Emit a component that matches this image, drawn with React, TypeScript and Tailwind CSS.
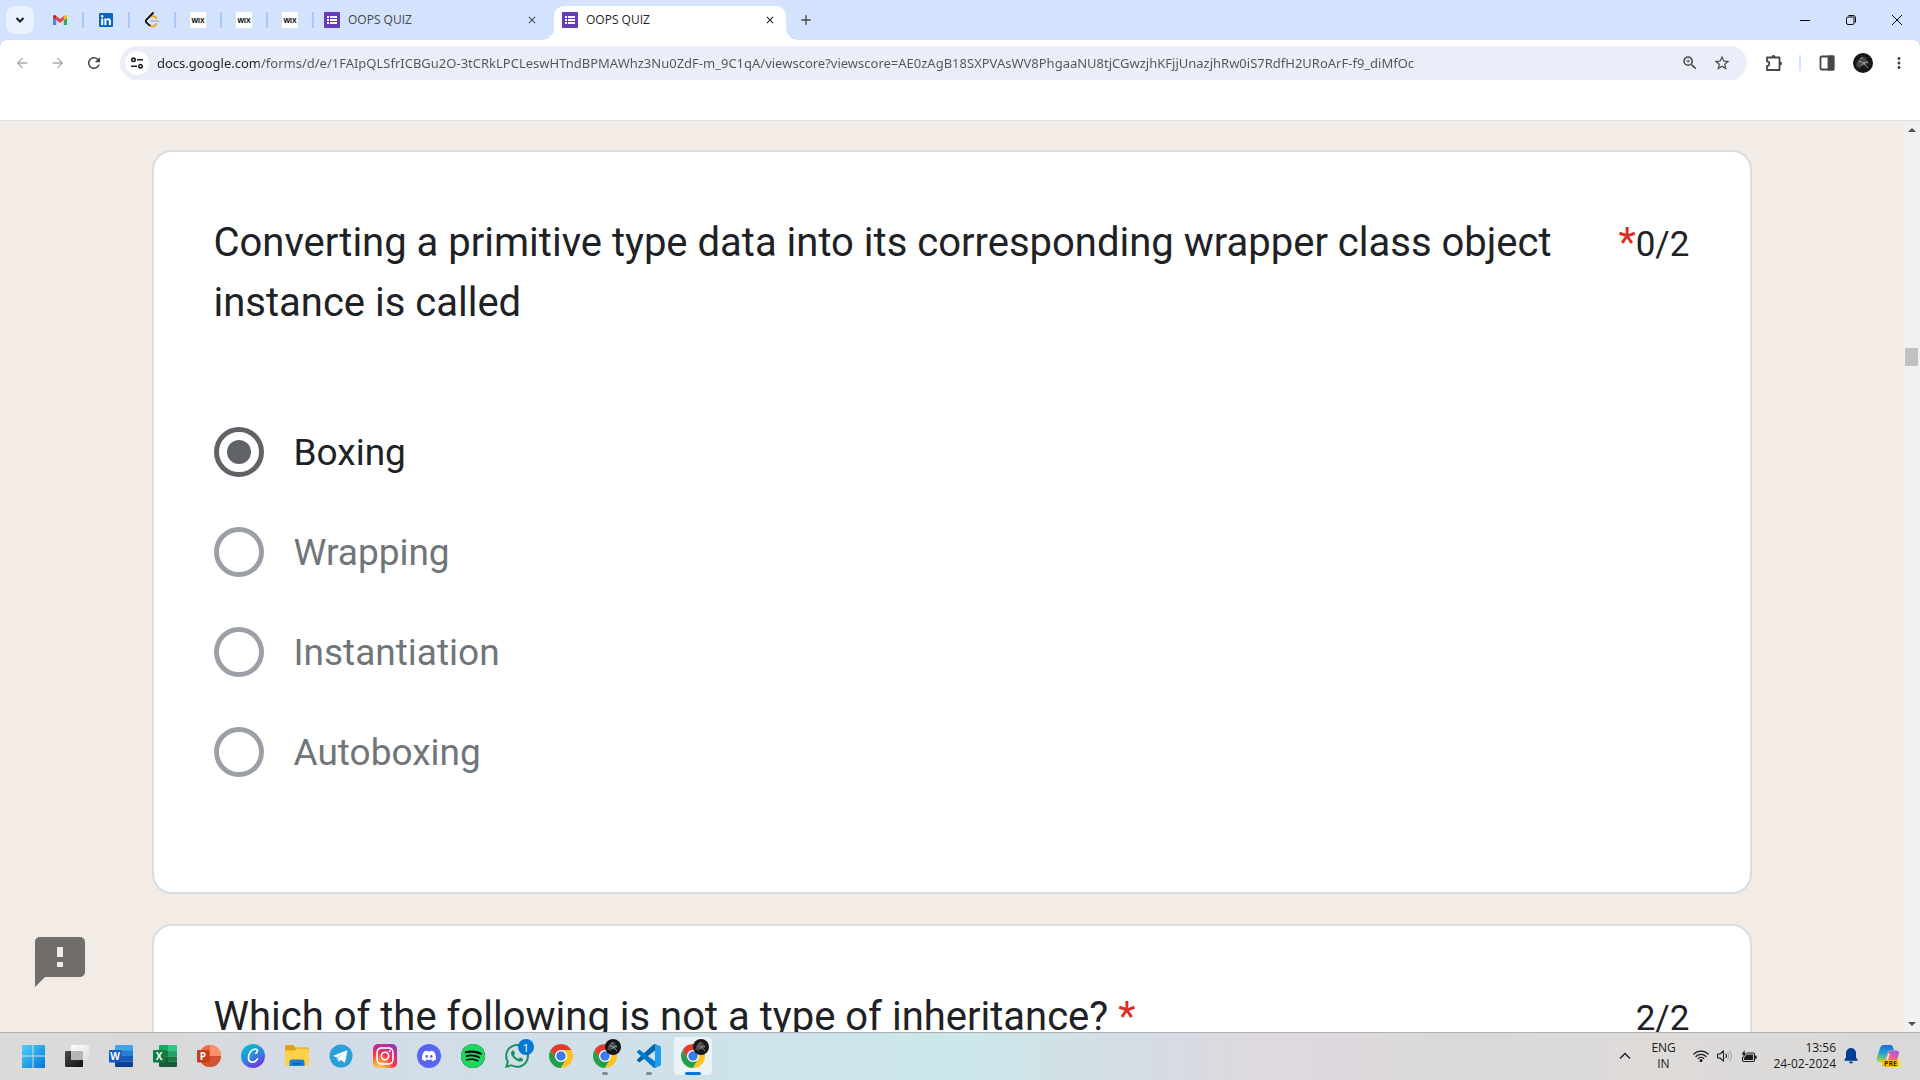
import type { ReactNode } from "react";
import { MdArrowBack, MdArrowForward, MdRefresh, MdZoomIn, MdStarBorder, MdMoreVert, MdClose, MdAdd } from "react-icons/md";
import { SiDiscord, SiSpotify, SiWhatsapp } from "react-icons/si";
import { FaInstagram } from "react-icons/fa";

/* ---------- site and app logos ---------- */

function GmailLogo() {
  return (
    <svg viewBox="52 42 88 66" className="w-3.5">
      <path fill="#4285f4" d="M58 108h14V74L52 59v43c0 3.32 2.69 6 6 6" />
      <path fill="#34a853" d="M120 108h14c3.32 0 6-2.69 6-6V59l-20 15" />
      <path fill="#fbbc04" d="M120 48v26l20-15v-8c0-7.42-8.47-11.65-14.4-7.2" />
      <path fill="#ea4335" d="M72 74V48l24 18 24-18v26L96 92" />
      <path fill="#c5221f" d="M52 51v8l20 15V48l-5.6-4.2c-5.94-4.45-14.4-.22-14.4 7.2" />
    </svg>
  );
}

function LinkedInLogo() {
  return (
    <svg viewBox="0 0 14 14" className="size-3.5">
      <rect width="14" height="14" rx="1" fill="#0a66c2" />
      <circle cx="3.2" cy="3.2" r="1.2" fill="#fff" />
      <path fill="#fff" d="M2.2 5.4h2V12h-2zM5.4 5.4h1.9v.9c.4-.7 1.1-1.1 2.1-1.1 2 0 2.5 1.3 2.5 3.1V12h-2V8.7c0-.9-.1-1.8-1.2-1.8s-1.3.9-1.3 1.8V12h-2z" />
    </svg>
  );
}

function LeetCodeLogo() {
  return (
    <svg viewBox="0 0 24 24" className="size-4" fill="none" strokeLinecap="round">
      <path d="M18.5 9 16 6.8a3.6 3.6 0 0 0-4-.2M9 20l.4.5a4.8 4.8 0 0 0 6.8 0l2.5-2.5" stroke="#ffa116" strokeWidth="2.8" />
      <path d="M10.500 13.500h11" stroke="#b3b3b3" strokeWidth="2.6" />
      <path d="M13.5 1.5 3.8 11.5a3.2 3.2 0 0 0 0 4.4L8.300 20" stroke="#111" strokeWidth="2.8" />
    </svg>
  );
}

function WixLogo() {
  return (
    <span className="grid size-4 place-items-center bg-white font-['Liberation_Sans',sans-serif] text-[7px] leading-none font-bold text-black">WIX</span>
  );
}

function FormsLogo() {
  return (
    <svg viewBox="0 0 16 16" className="size-4 shrink-0">
      <rect width="16" height="16" rx="1" fill="#673ab7" />
      <path fill="#fff" d="M3 4h2v2H3zM6 4h7v2H6zM3 7h2v2H3zM6 7h7v2H6zM3 10h2v2H3zM6 10h7v2H6z" />
    </svg>
  );
}

function WindowsLogo() {
  return (
    <svg viewBox="0 0 24 24" className="size-6">
      <defs>
        <linearGradient id="win" x1="0" y1="0" x2="1" y2="1">
          <stop offset="0" stopColor="#4fd0ff" />
          <stop offset="1" stopColor="#0078d4" />
        </linearGradient>
      </defs>
      <path fill="url(#win)" d="M1 1h10.500v10.500H1zM12.500 1H24v10.500H12.500zM1 12.500h10.500V24H1zM12.500 12.500H24V24H12.500z" />
    </svg>
  );
}

function TaskViewLogo() {
  return (
    <svg viewBox="0 0 24 24" className="size-6">
      <defs>
        <linearGradient id="tvd" x1="0" y1="0" x2="1" y2="1">
          <stop offset="0" stopColor="#4a4a4a" />
          <stop offset="1" stopColor="#111" />
        </linearGradient>
        <linearGradient id="tvl" x1="0" y1="0" x2="1" y2="1">
          <stop offset="0" stopColor="#ffffff" />
          <stop offset="1" stopColor="#dedede" />
        </linearGradient>
      </defs>
      <rect x="0" y="7" width="18" height="16" rx="1" fill="url(#tvd)" />
      <rect x="6" y="1" width="18" height="15" rx="1" fill="url(#tvl)" />
      <path d="M6 7h12v9H6z" fill="#b5b5b5" />
    </svg>
  );
}

function OfficeBadge({ color, letter }: { color: string; letter: "W" | "X" | "P" }) {
  return (
    <>
      <rect x="0" y="6" width="12.500" height="12.500" rx="1" fill={color} />
      <text x="6" y="16" textAnchor="middle" fill="#fff" className="font-['Open_Sans',sans-serif] text-[10px] font-bold">{letter}</text>
    </>
  );
}

function WordLogo() {
  return (
    <svg viewBox="0 0 24 24" className="size-6">
      <path fill="#41a5ee" d="M6 2a1 1 0 0 1 1-1h16a1 1 0 0 1 1 1v5H6z" />
      <path fill="#2b7cd3" d="M6 6.500h18V12H6z" />
      <path fill="#185abd" d="M6 12h18v5.500H6z" />
      <path fill="#103f91" d="M6 17.500h18V22a1 1 0 0 1-1 1H7a1 1 0 0 1-1-1z" />
      <OfficeBadge color="#185abd" letter="W" />
    </svg>
  );
}

function ExcelLogo() {
  return (
    <svg viewBox="0 0 24 24" className="size-6">
      <path fill="#21a366" d="M6 1h9v6H6z" />
      <path fill="#33c481" d="M15 1h8a1 1 0 0 1 1 1v5h-9z" />
      <path fill="#107c41" d="M6 7h9v5.500H6z" />
      <path fill="#21a366" d="M15 7h9v5.500h-9z" />
      <path fill="#185c37" d="M6 12.500h9V23H7a1 1 0 0 1-1-1z" />
      <path fill="#107c41" d="M15 12.500h9v5h-9z" />
      <path fill="#185c37" d="M15 17.500h9V22a1 1 0 0 1-1 1h-8z" />
      <OfficeBadge color="#107c41" letter="X" />
    </svg>
  );
}

function PowerPointLogo() {
  return (
    <svg viewBox="0 0 24 24" className="size-6">
      <circle cx="13" cy="12" r="11" fill="#ed6c47" />
      <path fill="#ff8f6b" d="M13 1a11 11 0 0 1 11 11H13z" />
      <path fill="#d35230" d="M2 12h22a11 11 0 0 1-22 0z" />
      <OfficeBadge color="#c43e1c" letter="P" />
    </svg>
  );
}

function CanvaLogo() {
  return (
    <svg viewBox="0 0 24 24" className="size-6">
      <defs>
        <linearGradient id="canva" x1="0.2" y1="0" x2="0.7" y2="1">
          <stop offset="0" stopColor="#00c4cc" />
          <stop offset="0.5" stopColor="#2a8ce0" />
          <stop offset="1" stopColor="#7d2ae8" />
        </linearGradient>
      </defs>
      <circle cx="12" cy="12" r="12" fill="url(#canva)" />
      <path d="M14.800 9.200c2-.8 2.200-4-.3-4.200-3.500-.2-7 4.200-7 8.600 0 6.200 6.300 5.600 9 1.300" fill="none" stroke="#fff" strokeWidth="1.7" strokeLinecap="round" />
    </svg>
  );
}

function ExplorerLogo() {
  return (
    <svg viewBox="0 0 24 24" className="size-6">
      <path fill="#e0a010" d="M0 2.500A1.500 1.500 0 0 1 1.500 1H8l2.500 2.500H22.500A1.500 1.500 0 0 1 24 5v4H0z" />
      <path fill="#ffd04a" d="M0 6.500h9.500L12 4.500h10.500A1.500 1.500 0 0 1 24 6v14.500a1.500 1.500 0 0 1-1.500 1.500h-21A1.500 1.500 0 0 1 0 20.500z" />
      <path fill="#1a7fd0" d="M4.500 22v-4A2.500 2.500 0 0 1 7 15.500h10a2.500 2.500 0 0 1 2.500 2.500v4z" />
      <path fill="#0b5ea8" d="M8 19h8v1.500H8z" />
    </svg>
  );
}

function TelegramLogo() {
  return (
    <svg viewBox="0 0 24 24" className="size-6">
      <circle cx="12" cy="12" r="11.500" fill="#2a9fda" />
      <path fill="#fff" d="M4.500 11.700 17.300 6.500c.7-.2 1.200.2 1 1l-2.100 10.200c-.2.7-.7.9-1.300.5l-3.200-2.400-1.700 1.600c-.3.300-.7.200-.8-.200L8.100 13.400l-3.500-1.100c-.4-.2-.4-.4-.1-.6z" />
      <path fill="#a9d4ec" d="m9.300 17.300.3-3.400 6-5.400-7.500 4.900z" />
    </svg>
  );
}

function InstagramLogo() {
  return (
    <span className="grid size-6 place-items-center rounded-[5px] bg-[radial-gradient(circle_at_25%_105%,#fdd76a_0%,#fb9a3c_25%,#f0384c_50%,#cc2a8c_72%,#7a3fc4_100%)]">
      <FaInstagram className="size-5 text-white" />
    </span>
  );
}

function DiscordLogo() {
  return (
    <span className="grid size-6 place-items-center rounded-full bg-[#5865f2]">
      <SiDiscord className="size-3.5 text-white" />
    </span>
  );
}

function SpotifyLogo() {
  return (
    <span className="grid size-6 place-items-center rounded-full bg-black">
      <SiSpotify className="size-6 text-[#1ed760]" />
    </span>
  );
}

function WhatsAppLogo() {
  return (
    <span className="relative grid size-6 place-items-center">
      <SiWhatsapp className="size-6 text-[#1f8f5f]" />
      <span className="absolute -top-[5px] left-[13px] grid size-4 place-items-center rounded-full bg-[#0078d4] text-[11px] leading-none text-white">1</span>
    </span>
  );
}

function ChromeLogo() {
  return (
    <svg viewBox="0 0 48 48" className="size-6">
      <circle cx="24" cy="24" r="13" fill="#fff" />
      <path fill="#e33b2e" d="M3.220 12A24 24 0 0 1 44.780 12H24A12 12 0 0 0 13.600 30z" />
      <path fill="#22a048" d="M24 48A24 24 0 0 1 3.220 12L13.600 30A12 12 0 0 0 34.400 30z" />
      <path fill="#fcc31e" d="M24 12H44.780A24 24 0 0 1 24 48L34.400 30A12 12 0 0 0 24 12z" />
      <circle cx="24" cy="24" r="9.500" fill="#3b7ded" />
    </svg>
  );
}

function DarkAvatar({ tint }: { tint: string }) {
  return (
    <svg viewBox="0 0 20 20" className="size-full">
      <circle cx="10" cy="10" r="10" fill="#161616" />
      <path d="M4 9c2-4 7-6 10-4l-3 1c3 0 5 3 4.500 6l-2-2-1.500 3-3-1-3 4-1-3-2 1z" fill="#4b4b4b" />
      <path d="m6 8 4 2 5-1M8 13l3-3 4 5M7 6l3-2" stroke={tint} strokeWidth="0.9" fill="none" />
    </svg>
  );
}

function ChromeProfileLogo({ tint }: { tint: string }) {
  return (
    <span className="relative block size-6">
      <ChromeLogo />
      <span className="absolute -top-[5px] left-3 block size-4">
        <DarkAvatar tint={tint} />
      </span>
    </span>
  );
}

function VsCodeLogo() {
  return (
    <svg viewBox="0 0 100 100" className="size-6">
      <path fill="#0065a9" d="M96.460 10.800 75.860.88a6.200 6.200 0 0 0-7.110 1.200L1.300 63.580a4.200 4.200 0 0 0 0 6.170l5.510 5a4.200 4.200 0 0 0 5.320.24l81.230-61.620A4.200 4.200 0 0 1 100 16.670v-.24a6.200 6.200 0 0 0-3.540-5.630z" />
      <path fill="#007acc" d="M96.460 89.200 75.860 99.120a6.200 6.200 0 0 1-7.110-1.200L1.300 36.420a4.200 4.200 0 0 1 0-6.170l5.510-5a4.200 4.200 0 0 1 5.320-.24l81.230 61.620A4.200 4.200 0 0 0 100 83.330v.24a6.200 6.200 0 0 1-3.540 5.630z" />
      <path fill="#1f9cf0" d="M75.860 99.130a6.200 6.200 0 0 1-7.110-1.210C71.060 100.220 75 98.590 75 95.330V4.670C75 1.410 71.060-.22 68.750 2.080a6.200 6.200 0 0 1 7.110-1.210l20.600 9.910A6.200 6.200 0 0 1 100 16.410v67.180a6.200 6.200 0 0 1-3.540 5.630z" />
    </svg>
  );
}

function CopilotLogo() {
  return (
    <span className="relative block size-6">
      <svg viewBox="0 0 24 24" className="size-6">
        <defs>
          <linearGradient id="cpa" x1="0.3" y1="0" x2="0.2" y2="1">
            <stop offset="0" stopColor="#1b6fe0" />
            <stop offset="0.5" stopColor="#25a8c8" />
            <stop offset="1" stopColor="#b8d63a" />
          </linearGradient>
          <linearGradient id="cpb" x1="1" y1="0" x2="0" y2="1">
            <stop offset="0" stopColor="#9a5cf0" />
            <stop offset="0.5" stopColor="#ee5c9c" />
            <stop offset="1" stopColor="#ff9a4a" />
          </linearGradient>
        </defs>
        <path fill="url(#cpb)" d="M15 6.500h5.500a2.500 2.500 0 0 1 2.400 3.300l-2.600 8.700a4 4 0 0 1-4 3H8.500l3.200-12.500A3.500 3.500 0 0 1 15 6.500z" />
        <path fill="url(#cpa)" d="M7.500 1H14a3 3 0 0 1 3 2.200l1 3.300h-3.500c-1.700 0-2.500 1-3 2.500L9.500 16c-.4 1.300-1.300 2-2.700 2H3a2.500 2.500 0 0 1-2.400-3.300L4.200 3.500A3.500 3.500 0 0 1 7.500 1z" />
        <path d="m13 9.500-2.600 9" stroke="#f3e9f2" strokeWidth="1.5" />
      </svg>
      <span className="absolute top-4 left-1.5 rounded-xs bg-[#ffc20e] px-0.5 text-[7px] leading-[7px] font-bold text-[#3a2a00]">PRE</span>
    </span>
  );
}

/* ---------- browser chrome ---------- */

const pinned = [
  { name: "Gmail", icon: <GmailLogo /> },
  { name: "LinkedIn", icon: <LinkedInLogo /> },
  { name: "LeetCode", icon: <LeetCodeLogo /> },
  { name: "Wix site 1", icon: <WixLogo /> },
  { name: "Wix site 2", icon: <WixLogo /> },
  { name: "Wix site 3", icon: <WixLogo /> },
];

function TabStrip() {
  return (
    <header className="flex h-10 items-center bg-[#d3e2fd] pl-1.5">
      <button aria-label="Search tabs" className="mr-1 grid size-7 place-items-center rounded-[9px] bg-[#eaf1fe]">
        <svg viewBox="0 0 10 10" className="size-2.5" fill="none" stroke="#1f1f1f" strokeWidth="2">
          <path d="m1.500 3 3.500 3.500L8.500 3" />
        </svg>
      </button>
      {pinned.map((p) => (
        <button key={p.name} aria-label={p.name} className="flex h-full w-[46px] items-center">
          <span className="grid flex-1 place-items-center">{p.icon}</span>
          <span className="h-4 w-0.5 bg-[#a8c7fa]" />
        </button>
      ))}
      <div className="flex h-full w-60 items-center pr-4 pl-2.5 text-[12px] text-[#474747]">
        <FormsLogo />
        <button className="flex-1 pl-2 text-left">OOPS QUIZ</button>
        <button aria-label="Close tab"><MdClose className="size-3" /></button>
      </div>
      <div className="relative flex h-[34px] w-[232px] items-center self-end rounded-t-[10px] bg-white pr-2.5 pb-1.5 pl-2 text-[12px] text-[#1f1f1f]">
        <span className="absolute bottom-0 -left-3 size-3 bg-[radial-gradient(circle_at_0_0,transparent_12px,white_12px)]" />
        <span className="absolute -right-3 bottom-0 size-3 bg-[radial-gradient(circle_at_100%_0,transparent_12px,white_12px)]" />
        <FormsLogo />
        <button className="flex-1 pl-2 text-left">OOPS QUIZ</button>
        <button aria-label="Close tab"><MdClose className="size-3" /></button>
      </div>
      <button aria-label="New tab" className="ml-3 text-[#474747]"><MdAdd className="size-4" /></button>
      <div className="ml-auto flex h-full text-black">
        <button aria-label="Minimize" className="grid w-[46px] place-items-center"><span className="h-px w-2.5 bg-black" /></button>
        <button aria-label="Restore" className="grid w-[46px] place-items-center">
          <svg viewBox="0 0 10 10" className="size-2.5 overflow-visible" fill="none" stroke="currentColor">
            <rect x="0.500" y="2" width="7.500" height="7.500" rx="1.500" />
            <path d="M2.500.5h4.500a2.500 2.500 0 0 1 2.500 2.500v4.500" />
          </svg>
        </button>
        <button aria-label="Close window" className="grid w-[46px] place-items-center">
          <svg viewBox="0 0 10 10" className="size-2.5" stroke="currentColor"><path d="m0 0 10 10M10 0 0 10" /></svg>
        </button>
      </div>
    </header>
  );
}

function Toolbar() {
  return (
    <div className="bg-[#d3e2fd]">
      <nav className="flex h-20 items-start rounded-t-lg bg-white px-3 pt-1.5">
        <div className="flex h-[34px] w-27 shrink-0 items-center gap-4 text-[#474747]">
          <button aria-label="Back" className="text-[#a9a9a9]"><MdArrowBack className="size-5 p-0.5" /></button>
          <button aria-label="Forward" className="text-[#a9a9a9]"><MdArrowForward className="size-5 p-0.5" /></button>
          <button aria-label="Reload"><MdRefresh className="size-5 p-px" /></button>
        </div>
        <div className="flex h-[34px] min-w-0 flex-1 items-center rounded-full bg-[#ebeef8] pr-4 pl-[5px] text-[#474747]">
          <button aria-label="View site information" className="grid size-6 shrink-0 place-items-center rounded-full bg-white">
            <svg viewBox="0 0 14 12" className="w-3.5" fill="none" stroke="#1f1f1f" strokeWidth="1.6">
              <circle cx="3.500" cy="2.800" r="1.700" />
              <path d="M7 2.800h6M1 9.200h6" />
              <circle cx="10.500" cy="9.200" r="1.700" />
            </svg>
          </button>
          <input
            aria-label="Address"
            readOnly
            className="ml-2 h-[34px] min-w-0 flex-1 bg-[linear-gradient(90deg,#1f1f1f_102px,#50545a_102px)] bg-clip-text font-['Noto_Sans',sans-serif] text-[13px] text-transparent outline-none"
            value="docs.google.com/forms/d/e/1FAIpQLSfrICBGu2O-3tCRkLPCLeswHTndBPMAWhz3Nu0ZdF-m_9C1qA/viewscore?viewscore=AE0zAgB18SXPVAsWV8PhgaaNU8tjCGwzjhKFjjUnazjhRw0iS7RdfH2URoArF-f9_diMfOc"
          />
          <button aria-label="Zoom"><MdZoomIn className="size-[18px]" /></button>
          <button aria-label="Bookmark this page" className="ml-3.5"><MdStarBorder className="size-[18px]" /></button>
        </div>
        <div className="ml-[18px] flex h-[34px] shrink-0 items-center text-[#474747]">
          <button aria-label="Extensions">
            <svg viewBox="0 0 18 18" className="size-[18px]" fill="none" stroke="currentColor" strokeWidth="1.8">
              <path d="M2 3.500h12.500V16H2v-4a2 2 0 0 0 0-4.500z" strokeLinejoin="round" />
              <path d="M6.500 3a2 2 0 0 1 4 0zM15 7.500a2 2 0 0 1 0 4z" fill="currentColor" stroke="none" />
            </svg>
          </button>
          <span className="mr-[18px] ml-4 h-4 w-0.5 bg-[#d3e2fd]" />
          <button aria-label="Side panel">
            <svg viewBox="0 0 16 16" className="size-4" fill="none" stroke="currentColor" strokeWidth="1.8">
              <rect x="1.500" y="1.500" width="13" height="13" rx="1" />
              <path d="M9.500 1.500h5v13h-5z" fill="currentColor" />
            </svg>
          </button>
          <button aria-label="Profile" className="mr-[17px] ml-[18px] size-5"><DarkAvatar tint="#a5a5a5" /></button>
          <button aria-label="Menu"><MdMoreVert className="size-[18px]" /></button>
        </div>
      </nav>
    </div>
  );
}

/* ---------- quiz ---------- */

function Star() {
  return <span className="text-[#d93025]">*</span>;
}

function Card({ title, marker, score, children }: { title: ReactNode; marker?: ReactNode; score: string; children?: ReactNode }) {
  return (
    <section className="rounded-[20px] border-2 border-[#dadce0] bg-white px-15 pt-[61px] pb-[90px] text-[#202124]">
      <div className="flex items-baseline text-[40px] leading-[60px]">
        <h2 className="flex-1 pr-10">{title}</h2>
        {marker}
        <span className="text-[35px]">{score}</span>
      </div>
      {children}
    </section>
  );
}

const options = ["Boxing", "Wrapping", "Instantiation", "Autoboxing"];

function Quiz() {
  return (
    <main className="relative min-w-0 flex-1 overflow-hidden bg-[#f3ebe6] px-8 pt-[29px] font-[Roboto,sans-serif]">
      <div className="mx-auto flex max-w-[1600px] flex-col gap-[30px]">
        <Card title="Converting a primitive type data into its corresponding wrapper class object instance is called" marker={<Star />} score="0/2">
          <div className="mt-[69px] text-[37px]">
            {options.map((o, i) => (
              <label key={o} className={`flex h-25 items-center gap-[30px] ${i === 0 ? "text-[#202124]" : "text-[#70757a]"}`}>
                <input
                  type="radio"
                  name="q1"
                  defaultChecked={i === 0}
                  className="grid size-[50px] appearance-none place-items-center rounded-full border-5 border-[#9aa0a6] checked:border-[#5f6368] checked:before:size-6 checked:before:rounded-full checked:before:bg-[#5f6368] checked:before:content-['']"
                />
                <span className="pt-0.5">{o}</span>
              </label>
            ))}
          </div>
        </Card>
        <Card title={<>Which of the following is not a type of inheritance? <Star /></>} score="2/2" />
      </div>
      <button aria-label="Report a problem" className="absolute bottom-10 left-[30px] text-[#706d6a]">
        <svg viewBox="0 0 24 24" className="size-15" fill="currentColor">
          <path d="M20 2H4c-1.100 0-1.990.9-1.990 2L2 22l4-4h14c1.100 0 2-.9 2-2V4c0-1.100-.9-2-2-2zm-6.800 12h-2.400v-2h2.400v2zm0-4h-2.400V6h2.400v4z" />
        </svg>
      </button>
    </main>
  );
}

function Scrollbar() {
  return (
    <div className="flex w-[17px] flex-col items-center bg-[#f1f1f1] pt-[7px] pb-1.5 text-[#505050]">
      <svg viewBox="0 0 8 4" className="w-2" fill="currentColor"><path d="M0 4 4 0l4 4z" /></svg>
      <div className="basis-[216px]" />
      <div className="h-[18px] w-[13px] bg-[#c1c1c1]" />
      <svg viewBox="0 0 8 4" className="mt-auto w-2" fill="currentColor"><path d="m0 0 4 4 4-4z" /></svg>
    </div>
  );
}

/* ---------- taskbar ---------- */

const apps: { name: string; icon: ReactNode; state?: "open" | "active" }[] = [
  { name: "Start", icon: <WindowsLogo /> },
  { name: "Task view", icon: <TaskViewLogo /> },
  { name: "Word", icon: <WordLogo /> },
  { name: "Excel", icon: <ExcelLogo /> },
  { name: "PowerPoint", icon: <PowerPointLogo /> },
  { name: "Canva", icon: <CanvaLogo /> },
  { name: "File Explorer", icon: <ExplorerLogo /> },
  { name: "Telegram", icon: <TelegramLogo /> },
  { name: "Instagram", icon: <InstagramLogo /> },
  { name: "Discord", icon: <DiscordLogo /> },
  { name: "Spotify", icon: <SpotifyLogo /> },
  { name: "WhatsApp", icon: <WhatsAppLogo /> },
  { name: "Chrome", icon: <ChromeLogo /> },
  { name: "Chrome, first profile", icon: <ChromeProfileLogo tint="#8fc4ea" />, state: "open" },
  { name: "Visual Studio Code", icon: <VsCodeLogo />, state: "open" },
  { name: "Chrome, second profile", icon: <ChromeProfileLogo tint="#9a9a9a" />, state: "active" },
];

function Taskbar() {
  return (
    <footer className="flex h-12 items-center border-t border-[#adb0b3] bg-[linear-gradient(90deg,#dcdad9_0%,#dad9d9_8%,#d2dce7_18%,#cfe1e9_35%,#cbe7ea_50%,#d6dce3_60%,#e0d8df_67%,#d9d9d9_76%,#dedbd9_86%,#d9d9d9_100%)] pr-5 pb-px pl-[11px] text-[12px] text-[#1b1b1b]">
      {apps.map((a) => (
        <button key={a.name} aria-label={a.name} className="relative flex h-full w-11 items-center justify-center">
          <span className={`grid h-[38px] w-[38px] place-items-center rounded-sm ${a.state === "active" ? "bg-white/60" : ""}`}>{a.icon}</span>
          {a.state === "open" && <span className="absolute bottom-1 h-[3px] w-1.5 rounded-full bg-[#83888c]" />}
          {a.state === "active" && <span className="absolute bottom-1 h-[3px] w-4 rounded-full bg-[#0078d4]" />}
        </button>
      ))}
      <div className="ml-auto flex items-center">
        <button aria-label="Show hidden icons">
          <svg viewBox="0 0 12 12" className="size-3" fill="none" stroke="currentColor" strokeWidth="1.3"><path d="m1 8.500 5-5 5 5" /></svg>
        </button>
        <button className="ml-5 w-6 text-center text-[12px] leading-4">ENG<br />IN</button>
        <button aria-label="Network, volume and battery" className="ml-[18px] flex items-center gap-2">
          <svg viewBox="0 0 16 12" className="w-4" fill="none" stroke="currentColor" strokeWidth="1.2" strokeLinecap="round">
            <path d="M.8 4.200a10.200 10.200 0 0 1 14.400 0M3 6.500a7 7 0 0 1 10 0M5.200 8.600a4 4 0 0 1 5.600 0" />
            <circle cx="8" cy="10.600" r="0.900" fill="currentColor" />
          </svg>
          <svg viewBox="0 0 16 12" className="w-4" fill="none" stroke="currentColor" strokeWidth="1.1" strokeLinejoin="round">
            <path d="M.6 4h2.400L6.500.8v10.400L3 8H.6z" />
            <path d="M8.600 4a2.800 2.800 0 0 1 0 4" />
            <path d="M10.500 2.500a5 5 0 0 1 0 7M12.500 1a7 7 0 0 1 0 10" stroke="#a5a5a5" />
          </svg>
          <svg viewBox="0 0 16 13" className="w-4" fill="none" stroke="currentColor" strokeWidth="1.2">
            <path d="M5.500 3h6.500a1.500 1.500 0 0 1 1.500 1.500v5.500a1.500 1.500 0 0 1-1.500 1.500H3A1.500 1.500 0 0 1 1.500 10V7" />
            <path d="M6 5.200h5.300v4.100H3.700V8z" fill="currentColor" />
            <path d="M14.800 5.700v3" strokeWidth="1.6" />
            <path d="M3.800 0 .5 4.500h2L2 8l3.500-4.800h-2z" fill="currentColor" stroke="none" />
          </svg>
        </button>
        <button className="ml-4 text-right text-[12px] leading-4 whitespace-nowrap">13:56<br />24-02-2024</button>
        <button aria-label="Notifications" className="ml-2">
          <svg viewBox="0 0 14 16" className="w-3.5" fill="#003e92">
            <path d="M7 0a5 5 0 0 1 5 5v4.500l1.600 2.300c.2.400 0 .900-.6.900H1c-.6 0-.8-.5-.6-.9L2 9.500V5a5 5 0 0 1 5-5zM5 13.600h4a2 2 0 0 1-4 0z" />
          </svg>
        </button>
        <button aria-label="Copilot" className="ml-[18px]"><CopilotLogo /></button>
      </div>
    </footer>
  );
}

export default function App() {
  return (
    <div className="flex h-screen flex-col overflow-hidden bg-white font-['Open_Sans',sans-serif]">
      <TabStrip />
      <Toolbar />
      <div className="flex min-h-0 flex-1 border-t border-[#dfe1e0]">
        <Quiz />
        <Scrollbar />
      </div>
      <Taskbar />
    </div>
  );
}
